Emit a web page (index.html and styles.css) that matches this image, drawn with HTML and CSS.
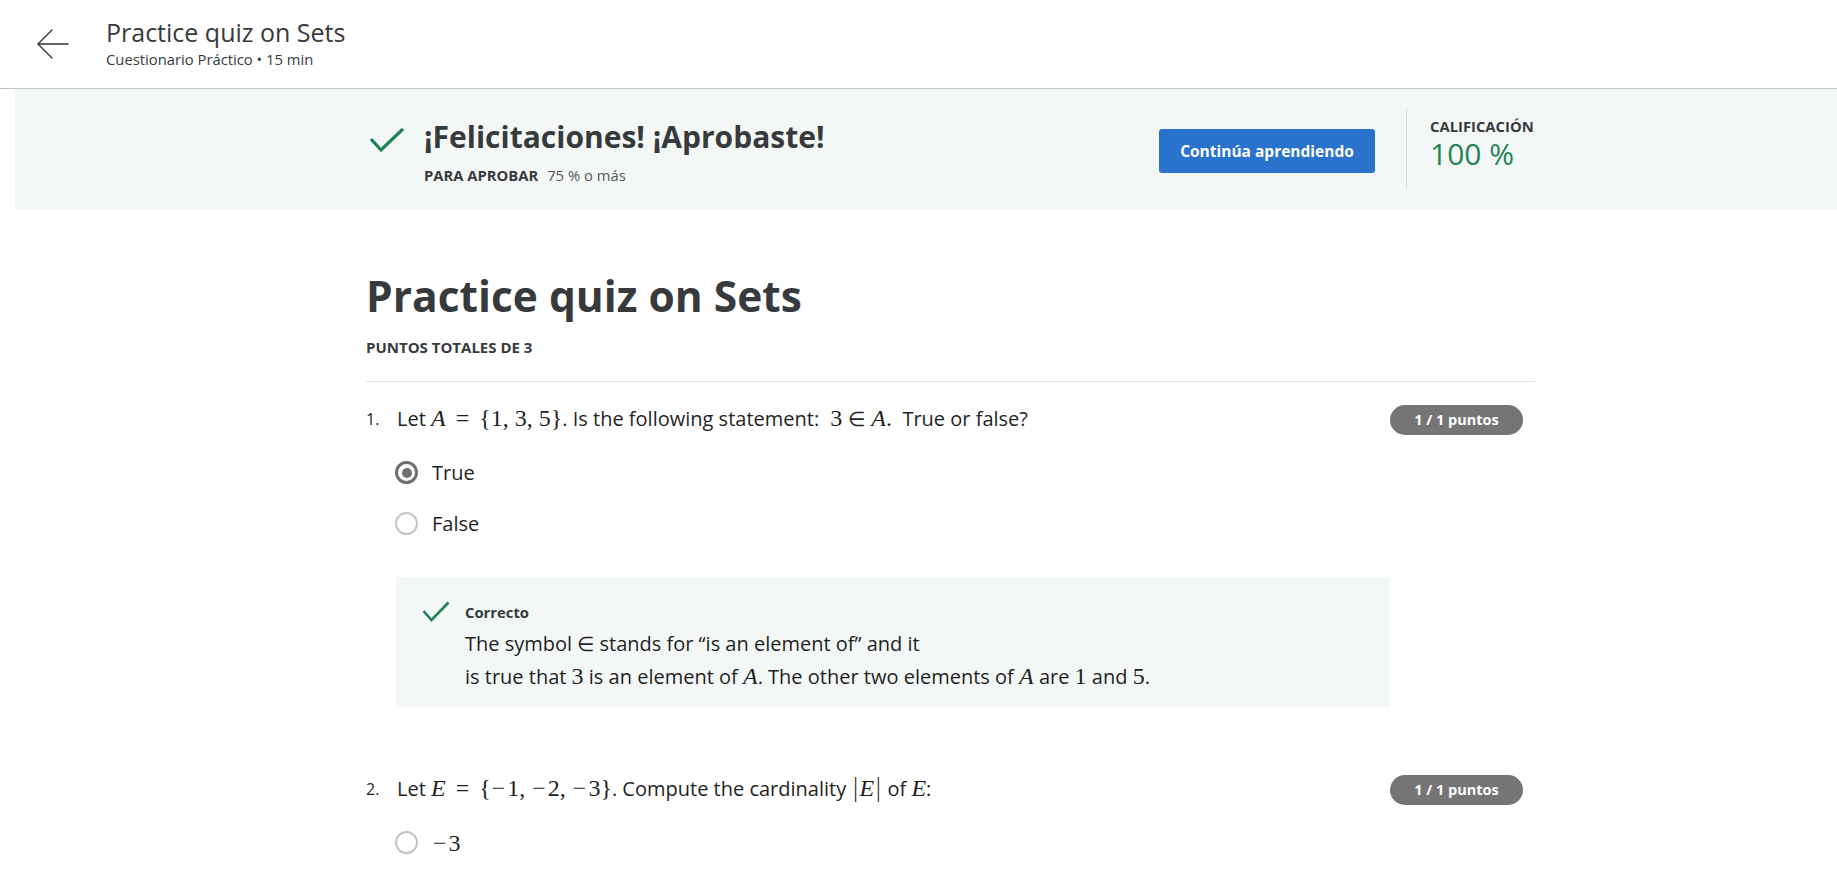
FILE: index.html
```html
<!DOCTYPE html>
<html lang="es">
<head>
<meta charset="utf-8">
<title>Practice quiz on Sets</title>
<link rel="stylesheet" href="styles.css">
</head>
<body>
<header class="topbar">
  <a class="back" href="#" aria-label="Volver">
    <svg width="32" height="32" viewBox="0 0 32 32" fill="none" stroke="#333" stroke-width="1.4" stroke-linecap="round" stroke-linejoin="round"><path d="M31 16H1"/><path d="M15 2L1 16l14 14"/></svg>
  </a>
  <div class="titles">
    <div class="title">Practice quiz on Sets</div>
    <div class="subtitle">Cuestionario Práctico • 15 min</div>
  </div>
</header>

<section class="banner">
  <div class="banner-inner">
    <svg class="big-check" width="36" height="26" viewBox="0 0 36 26" fill="none" stroke="#1f8354" stroke-width="3.2"><path d="M2 12l10 11L34 2"/></svg>
    <div class="pass">
      <div class="pass-title">¡Felicitaciones! ¡Aprobaste!</div>
      <div class="pass-req"><span class="req-label">PARA APROBAR</span> 75 % o más</div>
    </div>
    <div class="actions">
      <button class="continue">Continúa aprendiendo</button>
    </div>
    <div class="grade">
      <div class="grade-label">CALIFICACIÓN</div>
      <div class="grade-value">100 %</div>
    </div>
  </div>
</section>

<main class="content">
  <h1 class="quiz-title">Practice quiz on Sets</h1>
  <div class="total">PUNTOS TOTALES DE 3</div>
  <hr class="rule">

  <div class="question">
    <div class="q-row">
      <span class="q-num">1.</span>
      <div class="q-text">Let <span class="m"><i>A</i> <span class="rel">=</span> {1, 3, 5}</span>. Is the following statement: <span class="m">&nbsp;3 <span class="el">∈</span> <i>A</i>.</span>&nbsp; True or false?</div>
      <span class="badge">1 / 1 puntos</span>
    </div>
    <div class="options">
      <label class="opt"><span class="radio checked"></span><span>True</span></label>
      <label class="opt"><span class="radio"></span><span>False</span></label>
    </div>
    <div class="feedback">
      <div class="fb-head">
        <svg class="small-check" width="28" height="21" viewBox="0 0 28 21" fill="none" stroke="#1f8354" stroke-width="2.6"><path d="M1.5 10l8 9L26.5 1.5"/></svg>
        <span class="fb-label">Correcto</span>
      </div>
      <div class="fb-text">
        <div>The symbol <span class="m"><span class="el">∈</span></span> stands for “is an element of” and it</div>
        <div>is true that <span class="m">3</span> is an element of <span class="m"><i>A</i></span>. The other two elements of <span class="m"><i>A</i></span> are <span class="m">1</span> and <span class="m">5</span>.</div>
      </div>
    </div>
  </div>

  <div class="question q2">
    <div class="q-row">
      <span class="q-num">2.</span>
      <div class="q-text">Let <span class="m"><i>E</i> <span class="rel">=</span> {<span class="mn">−</span>1, <span class="mn">−</span>2, <span class="mn">−</span>3}</span>. Compute the cardinality <span class="m"><span class="bar">|</span><i>E</i><span class="bar">|</span></span> of <span class="m"><i>E</i></span>:</div>
      <span class="badge">1 / 1 puntos</span>
    </div>
    <div class="options">
      <label class="opt"><span class="radio"></span><span class="m"><span class="mn">−</span>3</span></label>
    </div>
  </div>
</main>
</body>
</html>
```

FILE: styles.css
```css
* { box-sizing: border-box; }
html, body { margin: 0; padding: 0; background: #fff; }
body {
  font-family: "Open Sans", "Noto Sans", sans-serif;
  color: #1f1f1f;
  overflow: hidden;
}

.topbar {
  height: 89px;
  border-bottom: 1px solid #c4c4c4;
  display: flex;
  align-items: flex-start;
  padding: 0 0 0 37px;
}
.back { display: block; margin-top: 28px; width: 32px; height: 32px; }
.titles { margin-left: 37px; padding-top: 15px; }
.title { font-size: 25px; line-height: 34px; color: #373a3c; }
.subtitle { font-size: 14.8px; line-height: 18px; color: #373a3c; margin-top: 1px; }

.banner {
  margin-left: 15px;
  height: 120px;
  background: #f3f8f6;
}
.banner-inner {
  display: flex;
  align-items: flex-start;
  padding-left: 354px;
  height: 100%;
}
.big-check { margin-top: 38px; flex: none; }
.pass { margin-left: 19px; padding-top: 28px; width: 735px; flex: none; }
.pass-title { font-size: 30px; font-weight: 700; line-height: 40px; color: #373a3c; }
.pass-req { font-size: 14.8px; line-height: 20px; color: #555; margin-top: 8px; }
.req-label { font-weight: 700; color: #373a3c; margin-right: 5px; }
.actions { padding-top: 40px; flex: none; }
.continue {
  display: block;
  width: 216px;
  height: 44px;
  border: 0;
  border-radius: 3px;
  background: #2a73cc;
  color: #fff;
  font-family: "Open Sans", sans-serif;
  font-weight: 700;
  font-size: 15.5px;
  line-height: 20px;
  padding: 0;
}
.grade {
  margin-left: 31px;
  margin-top: 19px;
  height: 82px;
  border-left: 1px solid #ddd;
  padding-left: 23px;
  padding-top: 8px;
}
.grade-label { font-size: 14.8px; font-weight: 700; color: #373a3c; line-height: 21px; }
.grade-value { font-size: 30px; color: #1f8354; line-height: 38px; margin-top: -2px; }

.content {
  margin-left: 366px;
  width: 1169px;
  padding-top: 58px;
}
.quiz-title {
  margin: 0;
  font-size: 42.5px;
  font-weight: 700;
  line-height: 58px;
  color: #373a3c;
}
.total { font-size: 15px; line-height: 20px; font-weight: 700; color: #373a3c; margin-top: 12px; }
.rule { border: 0; border-top: 1px solid #e1e1e1; margin: 24px 0 0; }

.question { padding-top: 22px; }
.q2 { padding-top: 67px; }
.q-row { display: flex; align-items: flex-start; }
.q-num { width: 31px; font-size: 16px; line-height: 30px; color: #1f1f1f; flex: none; }
.q-text { flex: 1; font-size: 20px; line-height: 30px; color: #1f1f1f; }
.badge {
  margin-right: 12px;
  margin-top: 1px;
  width: 133px;
  height: 30px;
  flex: none;
  border-radius: 15px;
  background: #757575;
  color: #fff;
  font-size: 14.5px;
  font-weight: 700;
  line-height: 30px;
  text-align: center;
}
.m { font-family: "Liberation Serif", "DejaVu Serif", serif; font-size: 24px; line-height: 1; }
.m i { font-style: italic; }
.rel { margin: 0 4px; }
.mn { margin: 0 2px 0 1px; }
.el { font-family: "DejaVu Sans", sans-serif; font-weight: 200; font-size: 20px; }
.bar { font-family: "DejaVu Sans", sans-serif; font-weight: 200; }

.options { padding-left: 29px; padding-top: 12px; }
.opt { display: flex; align-items: center; height: 51px; font-size: 20px; color: #1f1f1f; }
.radio {
  width: 23px; height: 23px;
  border-radius: 50%;
  border: 2px solid #c4c4c4;
  margin-right: 14px;
  position: relative;
  flex: none;
}
.radio.checked { border: 3px solid #6f6f6f; }
.radio.checked::after {
  content: "";
  position: absolute;
  left: 3.5px; top: 3.5px;
  width: 10px; height: 10px;
  border-radius: 50%;
  background: #6f6f6f;
}

.feedback {
  margin-left: 30px;
  margin-top: 28px;
  width: 994px;
  height: 130px;
  background: #f3f8f6;
  padding: 24px 0 0 26px;
}
.fb-head { display: flex; align-items: center; height: 21px; }
.fb-label { margin-left: 15px; font-size: 14.8px; font-weight: 700; color: #373a3c; }
.fb-text { padding-left: 43px; font-size: 20px; line-height: 33px; color: #1f1f1f; margin-top: 5px; }
```
